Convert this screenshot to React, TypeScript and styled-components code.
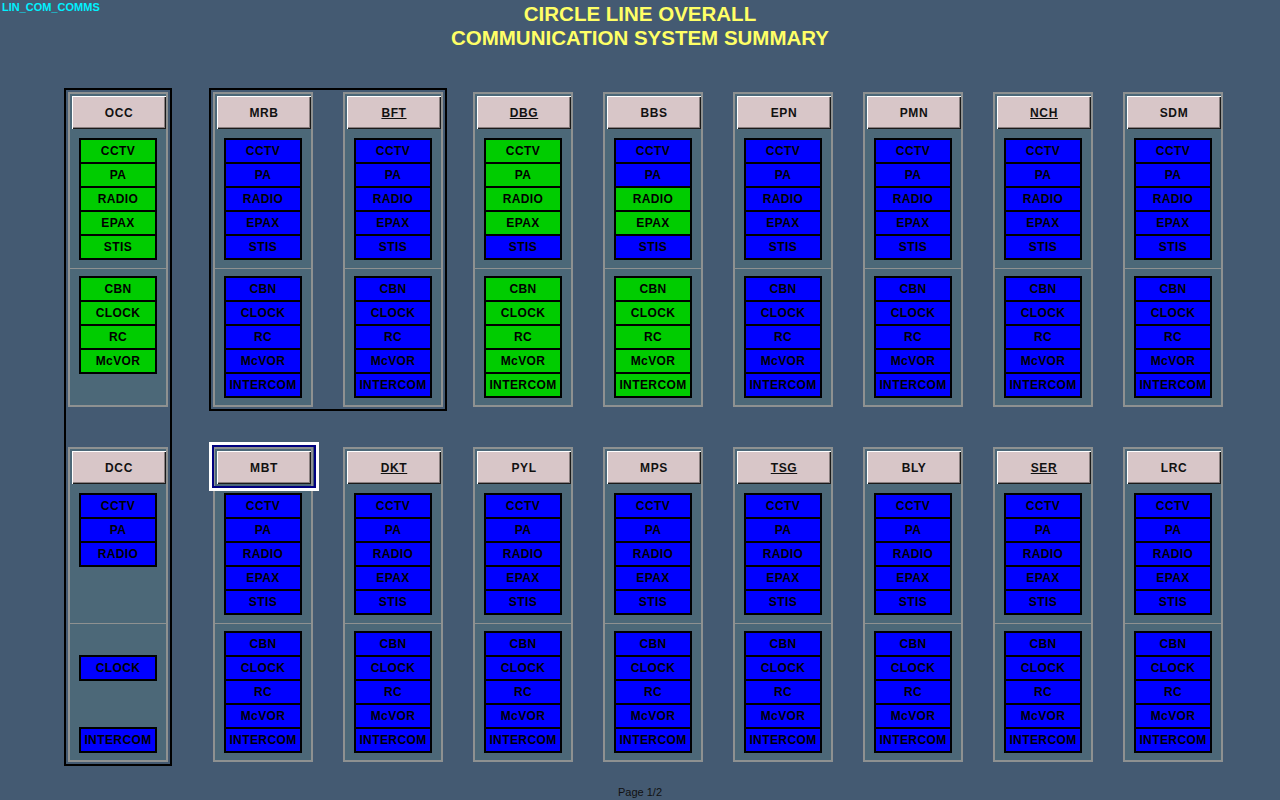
import styled, { createGlobalStyle } from 'styled-components';

// status colours used by the comms summary
type Status = 'ok' | 'fault' | 'none';

type Station = {
  code: string;
  underline?: boolean;
  focused?: boolean;
  upper: Status[];
  lower: Status[];
};

const UPPER = ['CCTV', 'PA', 'RADIO', 'EPAX', 'STIS'];
const LOWER = ['CBN', 'CLOCK', 'RC', 'McVOR', 'INTERCOM'];

const all = (s: Status): Status[] => [s, s, s, s, s];
const blue = (code: string, extra: Partial<Station> = {}): Station => ({
  code,
  upper: all('fault'),
  lower: all('fault'),
  ...extra,
});

const OCC: Station = {
  code: 'OCC',
  upper: all('ok'),
  lower: ['ok', 'ok', 'ok', 'ok', 'none'],
};

const DCC: Station = {
  code: 'DCC',
  upper: ['fault', 'fault', 'fault', 'none', 'none'],
  lower: ['none', 'fault', 'none', 'none', 'fault'],
};

const TOP_PAIR: Station[] = [blue('MRB'), blue('BFT', { underline: true })];

const TOP_ROW: Station[] = [
  {
    code: 'DBG',
    underline: true,
    upper: ['ok', 'ok', 'ok', 'ok', 'fault'],
    lower: all('ok'),
  },
  {
    code: 'BBS',
    upper: ['fault', 'fault', 'ok', 'ok', 'fault'],
    lower: all('ok'),
  },
  blue('EPN'),
  blue('PMN'),
  blue('NCH', { underline: true }),
  blue('SDM'),
];

const BOTTOM_ROW: Station[] = [
  blue('MBT', { focused: true }),
  blue('DKT', { underline: true }),
  blue('PYL'),
  blue('MPS'),
  blue('TSG', { underline: true }),
  blue('BLY'),
  blue('SER', { underline: true }),
  blue('LRC'),
];

const GlobalStyle = createGlobalStyle`
  html, body {
    margin: 0;
    padding: 0;
    background: #445a72;
  }
  body {
    font-family: "Liberation Sans", Arial, sans-serif;
  }
`;

const Screen = styled.div`
  width: 1280px;
  height: 800px;
  display: flex;
  flex-direction: column;
  background: #445a72;
  overflow: hidden;
`;

const TopBar = styled.header`
  display: grid;
  grid-template-columns: 1fr auto 1fr;
  padding-top: 2px;
`;

const SystemTag = styled.div`
  font-size: 11px;
  font-weight: bold;
  line-height: 13px;
  color: #00f0ff;
  padding-left: 2px;
  margin-top: -1px;
`;

const Title = styled.h1`
  margin: 0;
  font-size: 20.5px;
  font-weight: bold;
  line-height: 24px;
  text-align: center;
  color: #ffff66;
`;

const Main = styled.main`
  display: flex;
  align-items: flex-start;
  padding: 42px 0 0 68px;
`;

const GroupBox = styled.div<{ $vertical?: boolean }>`
  display: flex;
  flex-direction: ${(p) => (p.$vertical ? 'column' : 'row')};
  gap: ${(p) => (p.$vertical ? '40px' : '30px')};
  margin: -4px;
  padding: 2px;
  border: 2px solid #000;
`;

const StationArea = styled.div`
  display: flex;
  flex-direction: column;
  gap: 40px;
  margin-left: 45px;
`;

const Row = styled.div`
  display: flex;
  align-items: flex-start;
  gap: 30px;
`;

const Panel = styled.section`
  box-sizing: border-box;
  width: 100px;
  display: flex;
  flex-direction: column;
  padding: 2px 0 7px 0;
  border: 2px solid #8e9191;
  background: #4c6878;
`;

const StationButton = styled.div<{ $underline?: boolean; $focused?: boolean }>`
  position: relative;
  box-sizing: border-box;
  width: 94px;
  height: 33px;
  margin-left: 2px;
  display: flex;
  align-items: center;
  justify-content: center;
  background: #d8c6c8;
  box-shadow: inset 1px 1px 0 #ffffff, inset -1px -1px 0 #1a1a1a,
    inset -2px -2px 0 #8a7f80;
  font-size: 12px;
  font-weight: bold;
  letter-spacing: 0.6px;
  color: #111;
  text-decoration: ${(p) => (p.$underline ? 'underline' : 'none')};
  text-underline-offset: 1px;

  &::before {
    content: '';
    display: ${(p) => (p.$focused ? 'block' : 'none')};
    position: absolute;
    top: -9px;
    left: -8px;
    right: -8px;
    bottom: -7px;
    border: 3px solid #ffffff;
    box-shadow: inset 0 0 0 2px #000080;
    pointer-events: none;
  }
`;

const CellList = styled.div<{ $first?: boolean }>`
  display: flex;
  flex-direction: column;
  align-self: center;
  margin-top: ${(p) => (p.$first ? '9px' : '0')};
`;

const Divider = styled.div`
  height: 1px;
  margin: 8px 0 7px -2px;
  background: #8e9191;
`;

const Cell = styled.div<{ $status: Status }>`
  box-sizing: border-box;
  width: 78px;
  height: 26px;
  display: flex;
  align-items: center;
  justify-content: center;
  border: 2px solid #000;
  background: ${(p) => (p.$status === 'ok' ? '#00cc00' : '#0000ff')};
  visibility: ${(p) => (p.$status === 'none' ? 'hidden' : 'visible')};
  font-size: 12px;
  font-weight: bold;
  letter-spacing: 0.4px;
  color: #000;

  & + & {
    margin-top: -2px;
  }
`;

const Footer = styled.footer`
  margin-top: auto;
  padding-bottom: 1px;
  text-align: center;
  font-size: 11px;
  line-height: 13px;
  color: #111;
`;

const StationPanel = ({ station }: { station: Station }) => (
  <Panel>
    <StationButton $underline={station.underline} $focused={station.focused}>
      {station.code}
    </StationButton>
    <CellList $first>
      {UPPER.map((name, i) => (
        <Cell key={name} $status={station.upper[i]}>
          {name}
        </Cell>
      ))}
    </CellList>
    <Divider />
    <CellList>
      {LOWER.map((name, i) => (
        <Cell key={name} $status={station.lower[i]}>
          {name}
        </Cell>
      ))}
    </CellList>
  </Panel>
);

export default function App() {
  return (
    <>
      <GlobalStyle />
      <Screen>
        <TopBar>
          <SystemTag>LIN_COM_COMMS</SystemTag>
          <Title>
            CIRCLE LINE OVERALL
            <br />
            COMMUNICATION SYSTEM SUMMARY
          </Title>
          <div />
        </TopBar>

        <Main>
          <GroupBox $vertical>
            <StationPanel station={OCC} />
            <StationPanel station={DCC} />
          </GroupBox>

          <StationArea>
            <Row>
              <GroupBox>
                {TOP_PAIR.map((s) => (
                  <StationPanel key={s.code} station={s} />
                ))}
              </GroupBox>
              {TOP_ROW.map((s) => (
                <StationPanel key={s.code} station={s} />
              ))}
            </Row>
            <Row>
              {BOTTOM_ROW.map((s) => (
                <StationPanel key={s.code} station={s} />
              ))}
            </Row>
          </StationArea>
        </Main>

        <Footer>Page 1/2</Footer>
      </Screen>
    </>
  );
}
